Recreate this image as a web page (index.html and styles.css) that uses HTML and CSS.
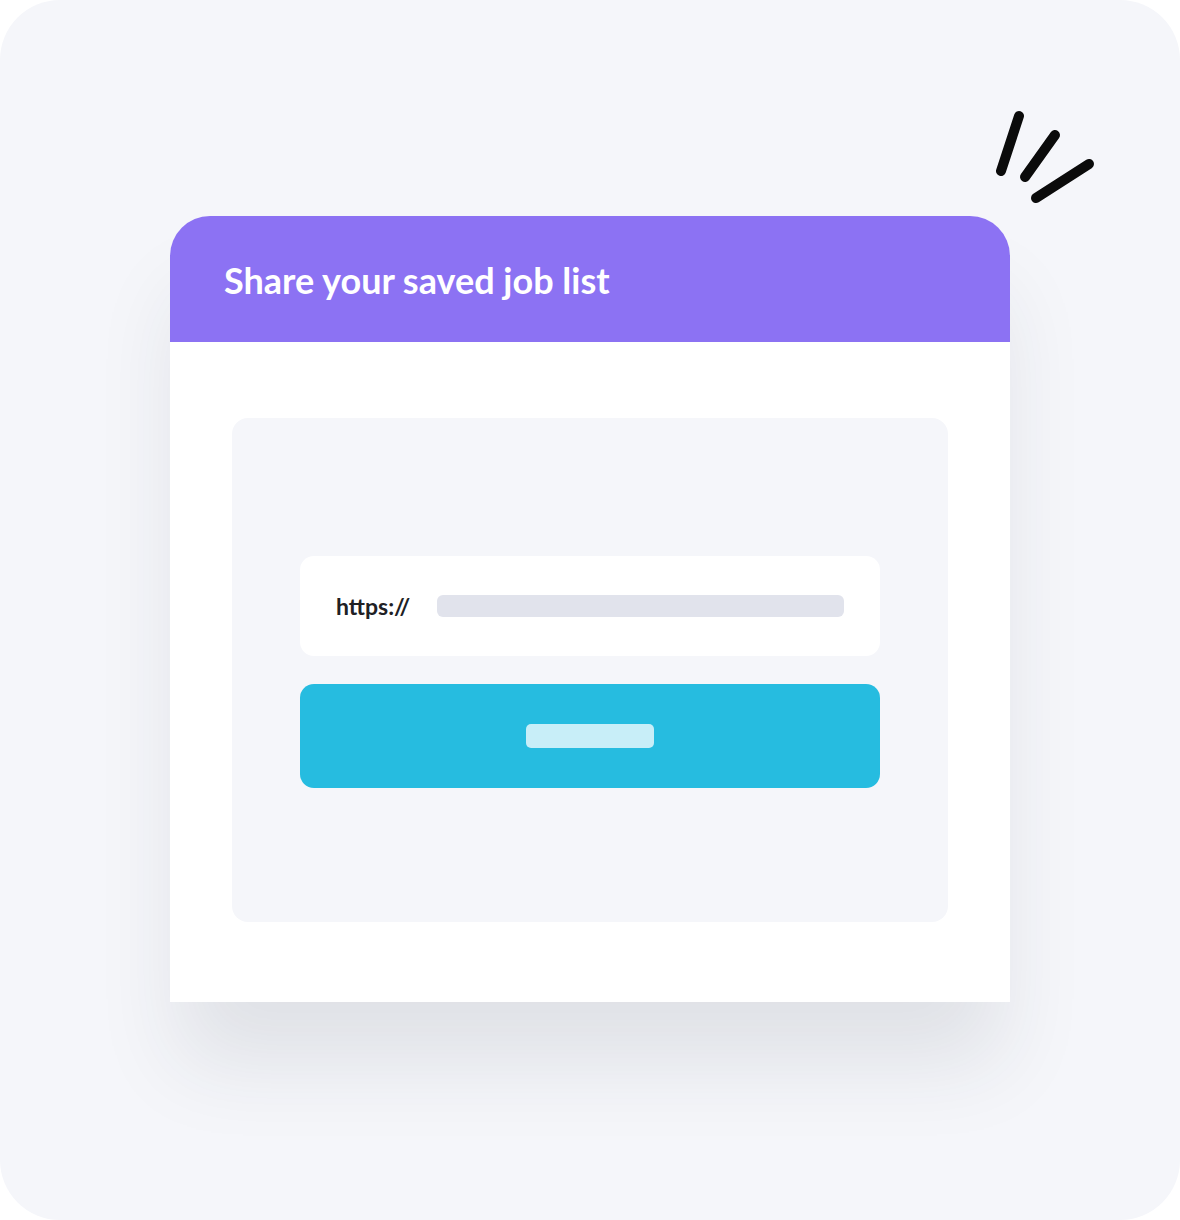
FILE: index.html
```html
<!DOCTYPE html>
<html>
<head>
<meta charset="utf-8">
<link rel="stylesheet" href="styles.css">
</head>
<body>
<div class="frame">
  <svg class="burst" width="120" height="110" viewBox="980 100 120 110" aria-hidden="true">
    <g stroke="#0b0b0b" stroke-width="10" stroke-linecap="round" fill="none">
      <line x1="1019" y1="116" x2="1001" y2="171"/>
      <line x1="1055" y1="135" x2="1025" y2="177"/>
      <line x1="1089" y1="164" x2="1036" y2="198"/>
    </g>
  </svg>
  <div class="card">
    <div class="card-header">
      <h1 class="title">Share your saved job list</h1>
    </div>
    <div class="card-body">
      <div class="panel">
        <div class="url-field">
          <span class="url-prefix">https://</span>
          <span class="url-bar"></span>
        </div>
        <div class="share-button">
          <span class="button-label"></span>
        </div>
      </div>
    </div>
  </div>
</div>
</body>
</html>
```

FILE: styles.css
```css
html, body {
  margin: 0;
  padding: 0;
  background: #ffffff;
}
.frame {
  position: relative;
  width: 1180px;
  height: 1220px;
  box-sizing: border-box;
  border-radius: 60px;
  background: #f5f6fa;
  padding: 216px 0 0 170px;
  overflow: hidden;
}
.burst {
  position: absolute;
  left: 980px;
  top: 100px;
}
.card {
  width: 840px;
  box-shadow: 0 70px 80px -10px rgba(40, 45, 60, 0.10);
}
.card-header {
  height: 126px;
  background: #8c72f3;
  border-radius: 40px 40px 0 0;
  display: flex;
  align-items: center;
  padding-left: 54px;
  box-sizing: border-box;
}
.title {
  margin: 0;
  font-family: Lato, "Open Sans", sans-serif;
  font-weight: 700;
  font-size: 36px;
  color: #ffffff;
  padding-top: 2px;
}
.card-body {
  background: #ffffff;
  height: 660px;
  padding: 76px 62px 0 62px;
  box-sizing: border-box;
}
.panel {
  height: 504px;
  background: #f5f6fa;
  border-radius: 16px;
  display: flex;
  flex-direction: column;
  justify-content: center;
  align-items: center;
  gap: 28px;
  padding-top: 4px;
  box-sizing: border-box;
}
.url-field {
  width: 580px;
  height: 100px;
  background: #ffffff;
  border-radius: 14px;
  display: flex;
  align-items: center;
  padding: 0 36px;
  box-sizing: border-box;
  gap: 27px;
}
.url-prefix {
  font-family: Lato, "Open Sans", sans-serif;
  font-weight: 700;
  font-size: 23px;
  color: #202024;
  letter-spacing: 0;
}
.url-bar {
  flex: 1;
  height: 22px;
  background: #e1e3ec;
  border-radius: 6px;
}
.share-button {
  width: 580px;
  height: 104px;
  background: #26bce0;
  border-radius: 14px;
  display: flex;
  align-items: center;
  justify-content: center;
}
.button-label {
  width: 128px;
  height: 24px;
  background: #c8eef8;
  border-radius: 5px;
}
```
